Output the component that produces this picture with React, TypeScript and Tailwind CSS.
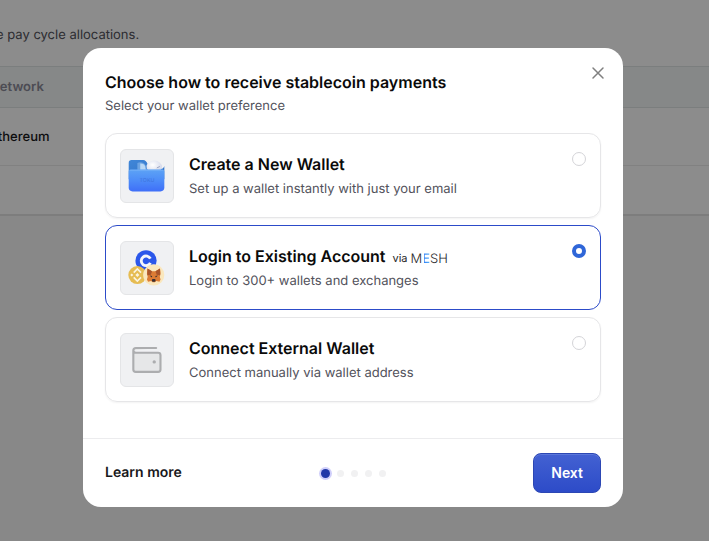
import { useState } from 'react'

function FolderArt() {
  return (
    <svg viewBox="0 0 54 54" className="size-full" aria-hidden="true">
      <defs>
        <linearGradient id="folder-front" x1="0" y1="0" x2="0" y2="1">
          <stop offset="0" stopColor="#5da3f5" />
          <stop offset="0.5" stopColor="#4d8cf8" />
          <stop offset="1" stopColor="#3f6ff8" />
        </linearGradient>
        <linearGradient id="folder-back" x1="0" y1="0" x2="1" y2="1">
          <stop offset="0" stopColor="#4087d8" />
          <stop offset="1" stopColor="#2f6fc4" />
        </linearGradient>
        <radialGradient id="folder-ball" cx="0.4" cy="0.35" r="0.7">
          <stop offset="0" stopColor="#ffffff" />
          <stop offset="1" stopColor="#cfd4e8" />
        </radialGradient>
      </defs>
      <path d="M8 13.500c0-2 1-3 3-3h12c2 0 4 2 5 5l2 4h12c2 0 3-3 3-3v14H8z" fill="url(#folder-back)" />
      <path d="M17 13.500c3-1.500 7-.5 8.500 2.500l2 6H17z" fill="#6da4e2" />
      <path d="M20 14c3 0 4.500 1 5 3l1 5h-6z" fill="#b9d7f5" />
      <ellipse cx="34.500" cy="17.500" rx="8" ry="6.500" fill="url(#folder-ball)" />
      <path d="M37.500 18.500l2.500-1.200" stroke="#9aa0bd" strokeWidth="1" strokeLinecap="round" />
      <path d="M8 22.500c0-1.500.8-2.200 2.300-2.200h32.400c1.500 0 2.300.7 2.300 2.200V39c0 2.600-1.400 4-4 4H12c-2.600 0-4-1.400-4-4z" fill="url(#folder-front)" />
      <path d="M9.500 21h34" stroke="#7ab4f7" strokeWidth="0.8" strokeLinecap="round" />
      <text x="27" y="33.500" textAnchor="middle" fontSize="5.500" fill="#3c72dc" fontFamily="Inter, sans-serif">
        TOKU
      </text>
    </svg>
  )
}

function ExchangesArt() {
  return (
    <svg viewBox="0 0 54 54" className="size-full" aria-hidden="true">
      <circle cx="26" cy="19.500" r="11" fill="#2b57ea" />
      <path d="M30.500 17.300a5 5 0 1 0 0 4.400" fill="none" stroke="#f4f6fb" strokeWidth="3" />
      <circle cx="17" cy="34.300" r="9.400" fill="#e6bc52" />
      <g fill="none" stroke="#fbf4df" strokeWidth="1.700">
        <path d="M13.200 31.800l3.800-3.800 3.800 3.800" />
        <path d="M13.200 36.800l3.800 3.800 3.800-3.800" />
      </g>
      <path d="M17 32.200l2.100 2.100-2.100 2.100-2.100-2.100zM11.200 32.700l1.600 1.600-1.600 1.600-1.600-1.600z" fill="#fbf4df" />
      <circle cx="34" cy="34.200" r="11" fill="#fae7bd" />
      <path d="M27.500 27.500l4.700 3h3.600l4.700-3 .6 5-.8 3.500.8 3-1.200 2.300-3.200-.8-1.500 1.300h-2.400l-1.500-1.300-3.200.8-1.200-2.300.8-3-.8-3.500z" fill="#dc7c35" />
      <path d="M27.500 27.500l4.700 3-1.200 3.400-3.700.5zM40.500 27.500l-4.700 3 1.200 3.400 3.700.5z" fill="#a9552b" />
      <path d="M29.700 34.700l2.700.6-.5 1.500zM38.300 34.700l-2.700.6.5 1.500z" fill="#3b3030" />
      <path d="M32.500 38.500h3l.5 2-1 .9h-2l-1-.9z" fill="#3a3033" />
    </svg>
  )
}

function WalletArt() {
  return (
    <svg viewBox="0 0 54 54" className="size-full" fill="none" stroke="#acadaf" strokeWidth="2.200" strokeLinecap="round" strokeLinejoin="round" aria-hidden="true">
      <path d="M36.500 14.500H15.500a2.700 2.700 0 0 0-2.700 2.700V36.800c0 1.700.8 2.500 2.500 2.500H38.500c1.700 0 2.500-.8 2.500-2.500V22c0-1.700-.8-2.500-2.500-2.500H15.500c-1.500 0-2.700-.8-2.700-2.300" fill="#e6e7e8" />
      <circle cx="34.500" cy="29" r="1" fill="#acadaf" strokeWidth="1.500" />
    </svg>
  )
}

function MeshBadge() {
  return (
    <span className="flex items-center pt-1 text-[11px] leading-4 text-[#27272a]">
      via
      <span className="ml-[3px] pt-0.5 text-[13px] font-light">
        M
        <span className="bg-[linear-gradient(90deg,transparent_2px,#2f80f5_2px,#5bb4fa)] bg-clip-text font-medium text-transparent">E</span>
        SH
      </span>
    </span>
  )
}

const options = [
  {
    id: 'create',
    title: 'Create a New Wallet',
    description: 'Set up a wallet instantly with just your email',
    art: <FolderArt />,
  },
  {
    id: 'login',
    title: 'Login to Existing Account',
    description: 'Login to 300+ wallets and exchanges',
    art: <ExchangesArt />,
    badge: <MeshBadge />,
  },
  {
    id: 'connect',
    title: 'Connect External Wallet',
    description: 'Connect manually via wallet address',
    art: <WalletArt />,
  },
]

function AllocationsPage() {
  return (
    <div className="min-h-screen bg-[#f7f7f7]">
      <div className="border-b-2 border-[#e4e4e4] bg-white">
        <p className="-ml-1 pt-[25px] pb-[21px] text-[13px] leading-5 text-[#52525b]">e pay cycle allocations.</p>
        <table className="w-full border-collapse text-left text-[13px] leading-5">
          <thead>
            <tr className="border-y border-[#e0e5e5] bg-[#f5f8f7]">
              <th className="py-2.5 font-semibold text-[#8b8b99]">
                <span className="-ml-2.5">Network</span>
              </th>
            </tr>
          </thead>
          <tbody>
            <tr className="border-b border-[#ebebeb]">
              <td className="pt-[19px] pb-[18px] font-medium text-[#18181b]">
                <span className="-ml-2.5">Ethereum</span>
              </td>
            </tr>
            <tr>
              <td className="h-12" />
            </tr>
          </tbody>
        </table>
      </div>
    </div>
  )
}

export default function App() {
  const [selected, setSelected] = useState('login')

  return (
    <div className="relative min-h-screen overflow-hidden font-['Inter',sans-serif] [text-rendering:geometricPrecision]">
      <AllocationsPage />
      <div className="absolute inset-0 flex items-start justify-center bg-black/45 pt-12 pr-[3px]">
        <div role="dialog" aria-labelledby="dialog-title" className="w-full max-w-[540px] rounded-[18px] bg-white">
          <div className="px-[22px] pt-6 pb-9">
            <div className="flex items-start justify-between">
              <div>
                <h2 id="dialog-title" className="text-base leading-5 font-semibold text-[#0a0a0a]">
                  Choose how to receive stablecoin payments
                </h2>
                <p className="mt-1 text-[13px] leading-5 text-[#52525b]">Select your wallet preference</p>
              </div>
              <button type="button" aria-label="Close" className="-mt-[15px] -mr-[13px] p-2">
                <svg viewBox="0 0 16 16" className="size-4" fill="none" stroke="#808080" strokeWidth="1.500" strokeLinecap="round">
                  <path d="M3 3l10 10M13 3L3 13" />
                </svg>
              </button>
            </div>

            <div className="mt-[17px] flex flex-col gap-[7px]">
              {options.map((option) => (
                <label
                  key={option.id}
                  className={`flex cursor-pointer items-center rounded-xl border px-3.5 pt-[15px] pb-3.5 ${
                    selected === option.id ? 'border-[#2c4bc9]' : 'border-[#e6e6e8] shadow-xs'
                  }`}
                >
                  <span className="size-[54px] shrink-0 overflow-hidden rounded-md border border-[#e4e5e7] bg-[#f0f1f3]">
                    {option.art}
                  </span>
                  <span className="ml-[15px] grow pb-px">
                    <span className="flex items-center gap-[7px]">
                      <span className="text-base leading-6 font-semibold text-[#0a0a0a]">{option.title}</span>
                      {option.badge}
                    </span>
                    <span className="mt-[3px] block text-[13px] leading-5 text-[#52525b]">{option.description}</span>
                  </span>
                  <input
                    type="radio"
                    name="wallet"
                    value={option.id}
                    checked={selected === option.id}
                    onChange={() => setSelected(option.id)}
                    className="mt-[3px] size-3.5 shrink-0 cursor-pointer appearance-none self-start rounded-full border border-[#d4d4d8] bg-white checked:border-4 checked:border-[#2f66d8]"
                  />
                </label>
              ))}
            </div>
          </div>

          <div className="flex items-center justify-between border-t border-[#ececee] px-[22px] py-3.5">
            <a href="#learn-more" className="flex-1 text-sm font-semibold text-[#18181b]">
              Learn more
            </a>
            <div className="flex items-center gap-[7px]">
              <span className="size-[9px] rounded-full bg-[#2138a8] ring-2 ring-[#d0cffa]" />
              <span className="size-[7px] rounded-full bg-[#f1f1f2]" />
              <span className="size-[7px] rounded-full bg-[#f1f1f2]" />
              <span className="size-[7px] rounded-full bg-[#f1f1f2]" />
              <span className="size-[7px] rounded-full bg-[#f1f1f2]" />
            </div>
            <div className="flex flex-1 justify-end">
              <button
                type="button"
                className="h-10 rounded-lg border border-[#2c47b4] bg-linear-to-b from-[#4361d2] to-[#2d4bc8] px-[17px] text-sm font-semibold text-white inset-shadow-[0_1px_0_#5b77db]"
              >
                Next
              </button>
            </div>
          </div>
        </div>
      </div>
    </div>
  )
}
